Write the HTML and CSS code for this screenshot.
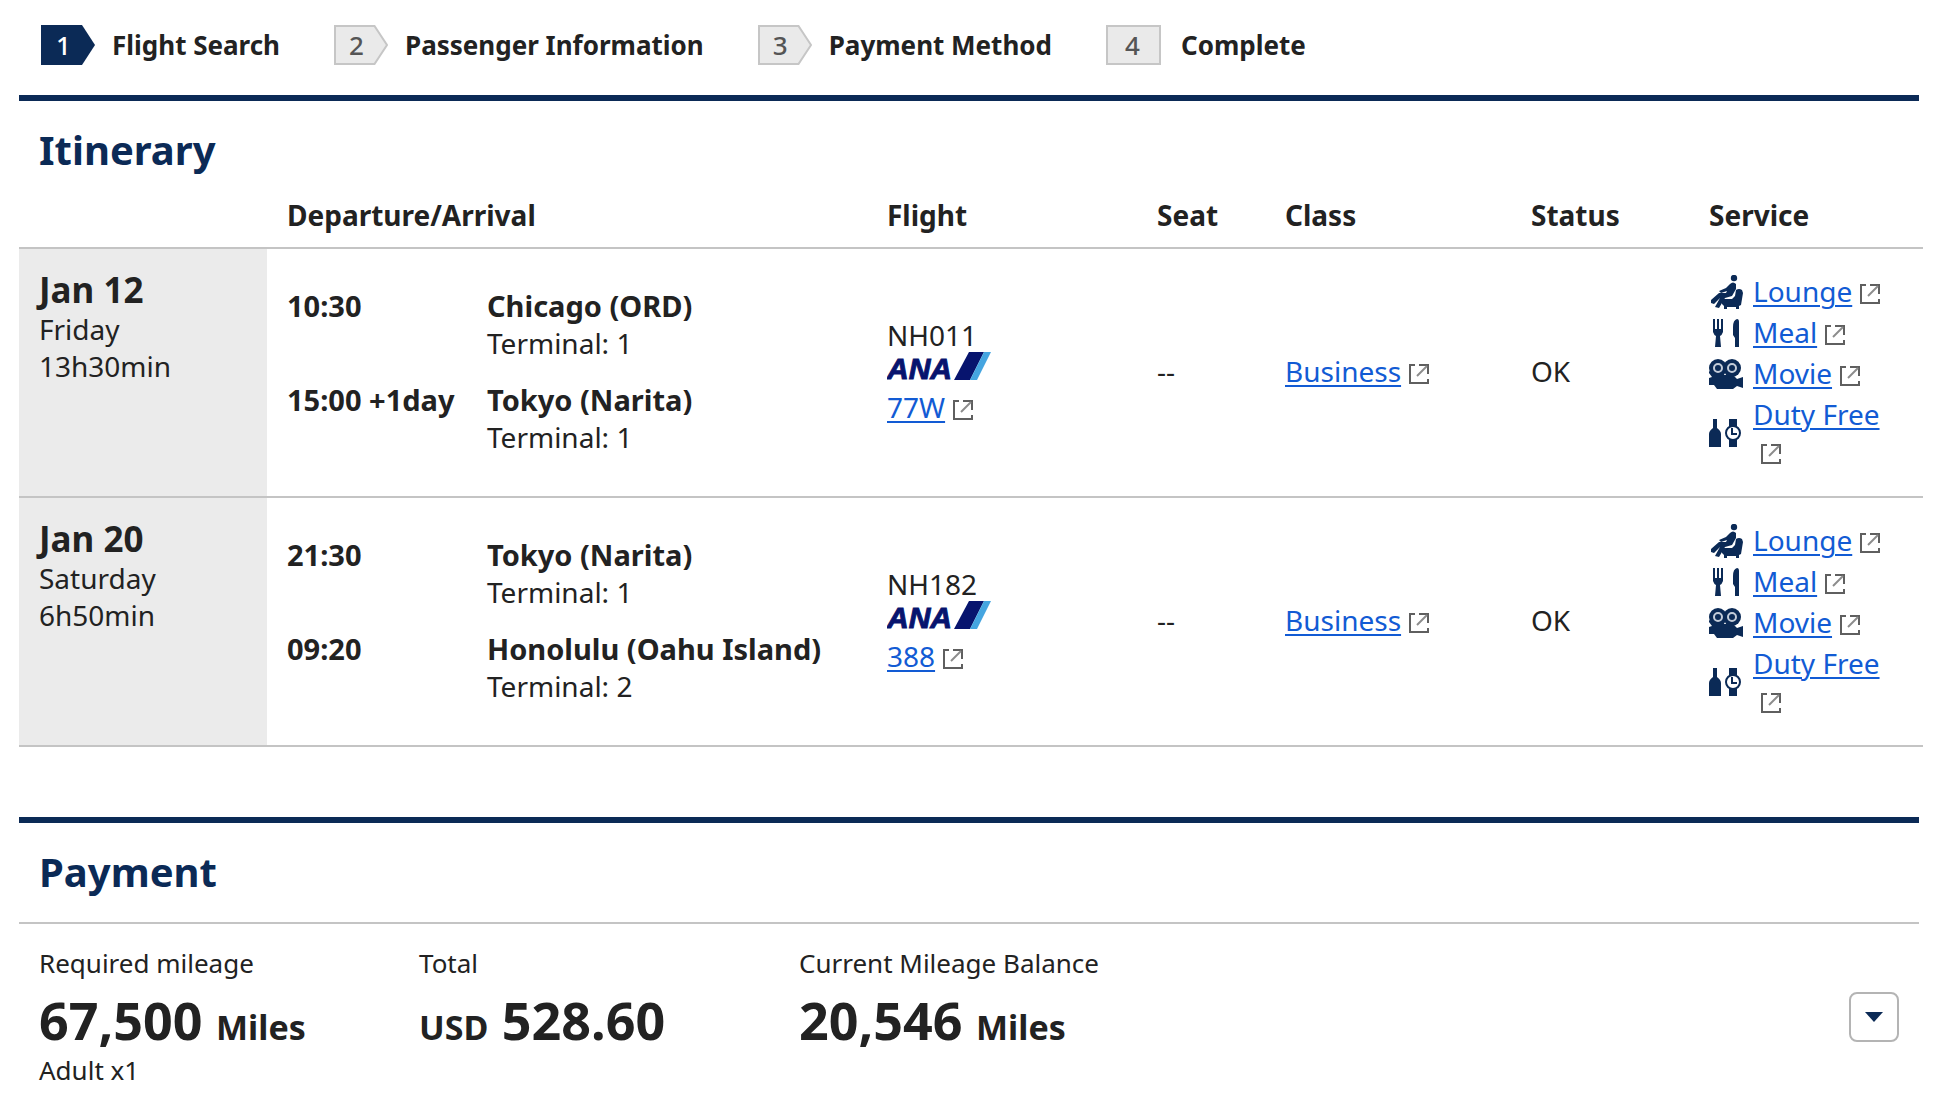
FILE: index.html
```html
<!DOCTYPE html>
<html lang="en">
<head>
    <meta charset="UTF-8">
    <meta name="viewport" content="width=device-width, initial-scale=1.0">
    <title>Flight Award Reservation</title>
    <link rel="stylesheet" href="styles.css">
</head>
<body>

    <!-- shared icons -->
    <svg class="sprite" aria-hidden="true">
        <symbol id="arrow-on" viewBox="0 0 55 40">
            <path d="M0 0H41L54 20L41 40H0Z" fill="#0b2a56"/>
        </symbol>
        <symbol id="arrow-off" viewBox="0 0 55 40">
            <path d="M1 1H40.500L53 20L40.500 39H1Z" fill="#eaeaea" stroke="#c6c6c6" stroke-width="2"/>
        </symbol>
        <symbol id="box-off" viewBox="0 0 55 40">
            <path d="M1 1H54V39H1Z" fill="#eaeaea" stroke="#c6c6c6" stroke-width="2"/>
        </symbol>
        <symbol id="external" viewBox="0 0 20 20">
            <path d="M6 1H1V19H19V15" fill="none" stroke="#5f5f5f" stroke-width="2"/>
            <path d="M10 1H19V10" fill="none" stroke="#5f5f5f" stroke-width="2"/>
            <path d="M8 12L18 2" fill="none" stroke="#8c8c8c" stroke-width="2"/>
        </symbol>
        <symbol id="lounge" viewBox="0 0 34 34">
            <circle cx="25" cy="3" r="3.200"/>
            <path d="M21 9Q24 6 27 9V14L23 21L16 23L10 33L6 32L11 23L5 29L2 28V25L10 18L17 18L18 16L12 18L10 16L17 13Z"/>
            <path d="M27 15Q30 13 33 15L34 18L32 30L30 31V34H27V32H18V34H15V31L13 29V24H23L26 21Z"/>
        </symbol>
        <symbol id="meal" viewBox="0 0 34 34">
            <path d="M4 3H6V13H8V3H10V13H12V3H14V16Q13 19 11 20L12 31H6L7 20Q5 19 4 16Z"/>
            <path d="M28 3Q30 3 30 6V31H26V22L24 19V11Q24 4 28 3Z"/>
        </symbol>
        <symbol id="movie" viewBox="0 0 34 34">
            <circle cx="9" cy="11" r="9"/>
            <circle cx="23" cy="11" r="9"/>
            <circle cx="9" cy="11" r="4" fill="none" stroke="#c3ccd9" stroke-width="2"/>
            <circle cx="23" cy="11" r="4" fill="none" stroke="#c3ccd9" stroke-width="2"/>
            <path d="M0 14L7 18H24L28 22L34 20V31L28 29L24 32H8L5 28H0V21L3 20L0 16Z"/>
        </symbol>
        <symbol id="duty-free" viewBox="0 0 34 34">
            <path d="M4 3H8V12Q12 15 12 18V31H0V18Q0 15 4 12Z"/>
            <path d="M20 3H28V10H20ZM20 24H28V31H20Z"/>
            <circle cx="24" cy="17" r="7" fill="#fff" stroke="#0b2a56" stroke-width="2"/>
            <path d="M23 12V18H28" fill="none" stroke="#0b2a56" stroke-width="2"/>
        </symbol>
        <symbol id="ana" viewBox="0 0 104 28">
            <text x="0" y="27" class="ana-text">ANA</text>
            <path d="M82 0H97L83 28H67Z" fill="#07146e"/>
            <path d="M97 0H104L90 28H83Z" fill="#45a5e0"/>
        </symbol>
    </svg>

    <ol class="steps">
        <li class="step active">
            <span class="step-number"><svg><use href="#arrow-on"/></svg><span>1</span></span>
            Flight Search
        </li>
        <li class="step">
            <span class="step-number"><svg><use href="#arrow-off"/></svg><span>2</span></span>
            Passenger Information
        </li>
        <li class="step">
            <span class="step-number"><svg><use href="#arrow-off"/></svg><span>3</span></span>
            Payment Method
        </li>
        <li class="step last">
            <span class="step-number"><svg><use href="#box-off"/></svg><span>4</span></span>
            Complete
        </li>
    </ol>

    <section class="itinerary">
        <h2>Itinerary</h2>
        <table>
            <thead>
                <tr>
                    <th class="col-date"></th>
                    <th>Departure/Arrival</th>
                    <th class="col-flight">Flight</th>
                    <th class="col-seat">Seat</th>
                    <th class="col-class">Class</th>
                    <th class="col-status">Status</th>
                    <th class="col-service">Service</th>
                </tr>
            </thead>
            <tbody>
                <tr>
                    <td class="date"><strong>Jan 12</strong><br>Friday<br>13h30min</td>
                    <td>
                        <div class="route">
                            <b>10:30</b>
                            <div><b>Chicago (ORD)</b><br>Terminal: 1</div>
                            <b>15:00 +1day</b>
                            <div><b>Tokyo (Narita)</b><br>Terminal: 1</div>
                        </div>
                    </td>
                    <td>
                        NH011
                        <svg class="airline" role="img" aria-label="ANA"><use href="#ana"/></svg>
                        <a href="#">77W</a><svg class="external"><use href="#external"/></svg>
                    </td>
                    <td>--</td>
                    <td><a href="#">Business</a><svg class="external"><use href="#external"/></svg></td>
                    <td>OK</td>
                    <td>
                        <ul class="services">
                            <li><svg class="icon"><use href="#lounge"/></svg><div><a href="#">Lounge</a><svg class="external"><use href="#external"/></svg></div></li>
                            <li><svg class="icon"><use href="#meal"/></svg><div><a href="#">Meal</a><svg class="external"><use href="#external"/></svg></div></li>
                            <li><svg class="icon"><use href="#movie"/></svg><div><a href="#">Movie</a><svg class="external"><use href="#external"/></svg></div></li>
                            <li><svg class="icon"><use href="#duty-free"/></svg><div><a href="#">Duty Free</a><br><svg class="external"><use href="#external"/></svg></div></li>
                        </ul>
                    </td>
                </tr>
                <tr>
                    <td class="date"><strong>Jan 20</strong><br>Saturday<br>6h50min</td>
                    <td>
                        <div class="route">
                            <b>21:30</b>
                            <div><b>Tokyo (Narita)</b><br>Terminal: 1</div>
                            <b>09:20</b>
                            <div><b>Honolulu (Oahu Island)</b><br>Terminal: 2</div>
                        </div>
                    </td>
                    <td>
                        NH182
                        <svg class="airline" role="img" aria-label="ANA"><use href="#ana"/></svg>
                        <a href="#">388</a><svg class="external"><use href="#external"/></svg>
                    </td>
                    <td>--</td>
                    <td><a href="#">Business</a><svg class="external"><use href="#external"/></svg></td>
                    <td>OK</td>
                    <td>
                        <ul class="services">
                            <li><svg class="icon"><use href="#lounge"/></svg><div><a href="#">Lounge</a><svg class="external"><use href="#external"/></svg></div></li>
                            <li><svg class="icon"><use href="#meal"/></svg><div><a href="#">Meal</a><svg class="external"><use href="#external"/></svg></div></li>
                            <li><svg class="icon"><use href="#movie"/></svg><div><a href="#">Movie</a><svg class="external"><use href="#external"/></svg></div></li>
                            <li><svg class="icon"><use href="#duty-free"/></svg><div><a href="#">Duty Free</a><br><svg class="external"><use href="#external"/></svg></div></li>
                        </ul>
                    </td>
                </tr>
            </tbody>
        </table>
    </section>

    <section class="payment">
        <h2>Payment</h2>
        <div class="summary">
            <div class="amount">
                <p>Required mileage</p>
                <p class="value">67,500 <small>Miles</small></p>
                <p>Adult x1</p>
            </div>
            <div class="amount">
                <p>Total</p>
                <p class="value"><small>USD</small> 528.60</p>
            </div>
            <div class="amount">
                <p>Current Mileage Balance</p>
                <p class="value">20,546 <small>Miles</small></p>
            </div>
            <button type="button" class="toggle" aria-label="Show details">
                <svg viewBox="0 0 18 10"><path d="M0 0H18L9 10Z"/></svg>
            </button>
        </div>
    </section>

</body>
</html>
```

FILE: styles.css
```css
* {
    box-sizing: border-box;
}

body {
    margin: 0;
    padding: 0 35px 0 19px;
    background: #fff;
    color: #222;
    font-family: "Noto Sans", "Open Sans", sans-serif;
    font-size: 28px;
    line-height: 37px;
}

h2, p, ol, ul {
    margin: 0;
    padding: 0;
}

ol, ul {
    list-style: none;
}

a {
    color: #125bd4;
    text-decoration-thickness: 2px;
    text-underline-offset: 3px;
}

.sprite {
    display: none;
}

/* steps */
.steps {
    display: flex;
    gap: 54px;
    padding: 25px 22px 30px;
}

.step {
    display: flex;
    align-items: center;
    gap: 16px;
    height: 40px;
    font-size: 26px;
    font-weight: bold;
    white-space: nowrap;
}

.step.last {
    gap: 20px;
}

.step-number {
    display: grid;
    width: 55px;
    height: 40px;
    color: #555;
    font-weight: 500;
}

.step-number svg,
.step-number span {
    grid-area: 1 / 1;
    width: 55px;
    height: 40px;
}

.step-number span {
    padding-right: 10px;
    line-height: 40px;
    text-align: center;
}

.step.last .step-number span {
    padding-right: 2px;
}

.step.active .step-number {
    color: #fff;
}

/* sections */
section {
    border-top: 6px solid #0b2a56;
}

h2 {
    padding: 19px 20px 20px;
    color: #0b2a56;
    font-size: 40px;
    line-height: 60px;
}

/* itinerary */
.itinerary {
    margin-bottom: 70px;
}

.itinerary h2 {
    padding-bottom: 0;
}

table {
    width: calc(100% + 4px);
    border-collapse: collapse;
    table-layout: fixed;
}

tr {
    border-bottom: 2px solid #c4c4c4;
}

th, td {
    padding: 0 20px;
    text-align: left;
}

th {
    height: 68px;
    padding-top: 4px;
}

td {
    height: 249px;
    padding-bottom: 2px;
}

.col-date { width: 248px; }
.col-flight { width: 270px; }
.col-seat { width: 128px; }
.col-class { width: 246px; }
.col-status { width: 178px; }
.col-service { width: 234px; }

.date {
    padding-top: 22px;
    background: #ebebeb;
    vertical-align: top;
}

.date strong {
    font-size: 35px;
}

.route {
    display: grid;
    grid-template-columns: 200px 1fr;
    row-gap: 19px;
    white-space: nowrap;
}

.route b {
    font-size: 29px;
}

.airline {
    display: block;
    width: 104px;
    height: 28px;
    margin: -2px 0 9px;
}

.ana-text {
    fill: #07146e;
    stroke: #07146e;
    font: italic bold 30px "Liberation Sans", sans-serif;
}

.external {
    width: 20px;
    height: 20px;
    margin-left: 8px;
    vertical-align: -2px;
}

.services {
    display: grid;
    gap: 4px;
    white-space: nowrap;
}

.services li {
    display: flex;
    align-items: center;
    gap: 10px;
}

.icon {
    width: 34px;
    height: 34px;
    fill: #0b2a56;
}

/* payment */
.summary {
    display: flex;
    align-items: center;
    padding: 21px 20px 0 0;
    border-top: 2px solid #c4c4c4;
    font-size: 26px;
}

.amount {
    align-self: flex-start;
    width: 380px;
    padding-left: 20px;
    white-space: nowrap;
}

.value {
    padding-top: 13px;
    font-size: 52px;
    font-weight: bold;
    line-height: 50px;
}

.value small {
    font-size: 34px;
}

.toggle {
    display: grid;
    place-items: center;
    width: 50px;
    height: 50px;
    margin-left: auto;
    padding: 0;
    border: 2px solid #b4b4b4;
    border-radius: 8px;
    background: #fff;
}

.toggle svg {
    width: 18px;
    height: 10px;
    fill: #0b2a56;
}
```
